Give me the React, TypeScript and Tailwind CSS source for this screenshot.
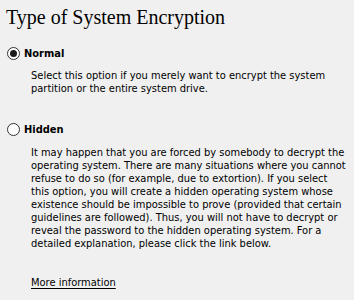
import React from "react";

const body = "font-['DejaVu_Sans_Condensed','Liberation_Sans',sans-serif]";

function Radio({ checked }: { checked?: boolean }) {
  return (
    <span className="flex h-[13px] w-[13px] shrink-0 items-center justify-center rounded-full border border-[#333333] bg-white">
      {checked && <span className="h-[7px] w-[7px] rounded-full bg-[#1a1a1a]" />}
    </span>
  );
}

export default function App() {
  return (
    <div className={`h-[300px] w-[354px] overflow-hidden bg-[#f0f0f0] text-black ${body}`}>
      <h1 className="pl-[6px] pt-[5px] font-['Liberation_Serif',serif] text-[20px] leading-[24px] text-black">
        Type of System Encryption
      </h1>

      <div className="mt-[18px] flex items-center gap-[4px] pl-[7px]">
        <Radio checked />
        <span className="text-[11px] font-bold leading-[13px]">Normal</span>
      </div>
      <p className="mt-[9px] pl-[31px] text-[11px] leading-[13px]">
        Select this option if you merely want to encrypt the system
        <br />
        partition or the entire system drive.
      </p>

      <div className="mt-[28px] flex items-center gap-[4px] pl-[7px]">
        <Radio />
        <span className="text-[11px] font-bold leading-[13px]">Hidden</span>
      </div>
      <p className="mt-[10px] pl-[31px] text-[11px] leading-[13px]">
        It may happen that you are forced by somebody to decrypt the
        <br />
        operating system. There are many situations where you cannot
        <br />
        refuse to do so (for example, due to extortion). If you select
        <br />
        this option, you will create a hidden operating system whose
        <br />
        existence should be impossible to prove (provided that certain
        <br />
        guidelines are followed). Thus, you will not have to decrypt or
        <br />
        reveal the password to the hidden operating system. For a
        <br />
        detailed explanation, please click the link below.
      </p>

      <p className="mt-[26px] pl-[31px] text-[11px] leading-[13px]">
        <span className="underline underline-offset-[2px]">More information</span>
      </p>
    </div>
  );
}
